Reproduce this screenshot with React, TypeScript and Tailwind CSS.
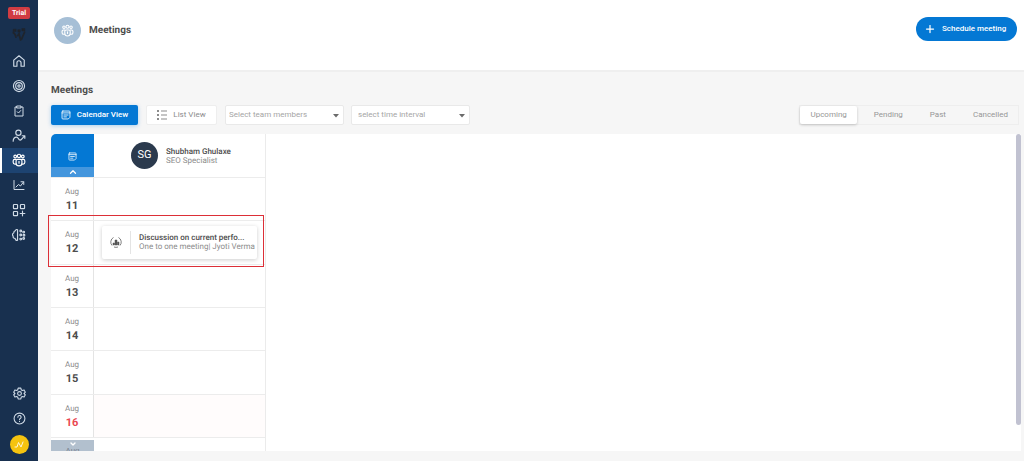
import { useState } from 'react';
import type { ReactNode } from 'react';
import { ChevronDown, ChevronUp, Plus } from 'lucide-react';

type IconProps = { className?: string; children?: ReactNode };

function Icon({ className = 'w-[14px] h-[14px]', children }: IconProps) {
  return (
    <svg
      viewBox="0 0 24 24"
      fill="none"
      stroke="currentColor"
      strokeWidth={2}
      strokeLinecap="round"
      strokeLinejoin="round"
      className={className}
      aria-hidden="true"
    >
      {children}
    </svg>
  );
}

function PeopleIcon({ className }: IconProps) {
  return (
    <Icon className={className}>
      <circle cx="5.500" cy="6" r="2.3" />
      <circle cx="12" cy="5" r="2.8" />
      <circle cx="18.500" cy="6" r="2.3" />
      <path d="M7 11H4.500A2.500 2.500 0 0 0 2 13.500V16a3 3 0 0 0 3 3h1.500" />
      <path d="M17 11h2.500a2.500 2.500 0 0 1 2.500 2.500V16a3 3 0 0 1-3 3h-1.500" />
      <path d="M9.500 11h5a2.500 2.500 0 0 1 2.500 2.500V17a5 5 0 0 1-10 0v-3.500A2.500 2.500 0 0 1 9.500 11z" />
      <path d="M12 14.500v3" />
    </Icon>
  );
}

function NoteIcon({ className }: IconProps) {
  return (
    <Icon className={className}>
      <path d="M4.500 2.500h15a2 2 0 0 1 2 2v13l-4 4h-13a2 2 0 0 1-2-2v-15a2 2 0 0 1 2-2z" />
      <path d="M2.500 7h19M7 12h10M7 16.500h6" />
    </Icon>
  );
}

const navItems = [
  {
    label: 'Home',
    icon: (
      <Icon>
        <path d="M3 10.500 12 3l9 7.500V21h-5.500v-6a3.500 3.500 0 0 0-7 0v6H3z" />
      </Icon>
    ),
  },
  {
    label: 'Goals',
    icon: (
      <Icon>
        <circle cx="12" cy="12" r="9.500" />
        <circle cx="12" cy="12" r="5.700" />
        <circle cx="12" cy="12" r="2" />
      </Icon>
    ),
  },
  {
    label: 'Tasks',
    icon: (
      <Icon className="w-[12px] h-[12px]">
        <path d="M8 4H4v18h16V4h-4" />
        <path d="M8 2h8v4H8zM8.500 13.500l2.500 2.500 4.500-5" />
      </Icon>
    ),
  },
  {
    label: 'Feedback',
    icon: (
      <Icon>
        <circle cx="11" cy="6.500" r="4.500" />
        <path d="M2 21c0-4 2.500-7 6-7 3 0 3 5 6 5s4-5 8-7M17.500 11.500H22V16" />
      </Icon>
    ),
  },
  { label: 'Meetings', icon: <PeopleIcon className="w-[14px] h-[14px]" /> },
  {
    label: 'Reports',
    icon: (
      <Icon className="w-[12px] h-[12px]">
        <path d="M2 3v18h20M6 16l5-5 4 3 6-8M16 5.500h5.500V11" />
      </Icon>
    ),
  },
  {
    label: 'Apps',
    icon: (
      <Icon>
        <rect x="2.500" y="2.500" width="7" height="7" rx="1" />
        <rect x="14.500" y="2.500" width="7" height="7" rx="1" />
        <rect x="2.500" y="14.500" width="7" height="7" rx="1" />
        <path d="M18 14v8M14 18h8" />
      </Icon>
    ),
  },
  {
    label: 'Insights',
    icon: (
      <Icon>
        <path d="M9.500 3v18c-2.500 1-4-1-4-3-3 0-4-2-3.500-4-2-2-1-5 1-5.500C3 5.500 4 5 5.500 5c.5-2 2-3 4-2z" />
        <circle cx="15" cy="5" r="1.500" />
        <circle cx="20" cy="7" r="1.500" />
        <circle cx="15" cy="12" r="1.500" />
        <circle cx="20.500" cy="12.500" r="1.500" />
        <circle cx="15" cy="19" r="1.500" />
        <circle cx="20" cy="18" r="1.500" />
      </Icon>
    ),
  },
];

const days = ['11', '12', '13', '14', '15', '16'];
const tabs = ['Upcoming', 'Pending', 'Past', 'Cancelled'];

function Sidebar() {
  return (
    <aside className="w-[38px] shrink-0 bg-[#18304f] text-[#cfdae6] flex flex-col items-center pt-[7px] pb-[7px]">
      <span className="w-[22px] h-3 rounded-[2px] bg-[#d13c42] text-white text-[7px] leading-3 font-bold text-center">
        Trial
      </span>
      <svg
        viewBox="0 0 24 24"
        className="w-[14px] h-[14px] mt-[9px] shrink-0 text-[#1f242c]"
        fill="none"
        stroke="currentColor"
        strokeWidth={3}
        aria-hidden="true"
      >
        <path d="M1 8c3 0 5 4 6 9M9 14l3-4 3 12M16 20l6-14" />
        <path d="M2 2h5v4H2zM10 3h4v4h-4zM17 1h5v4h-5z" fill="currentColor" strokeWidth={1} />
      </svg>
      <nav className="w-full grid grid-rows-8 h-[198px] mt-[7px]">
        {navItems.map((item) => (
          <a
            key={item.label}
            href="#"
            aria-label={item.label}
            className={`flex items-center justify-center ${
              item.label === 'Meetings' ? 'bg-[#1d4371] text-white border-l-2 border-white pr-[2px]' : ''
            }`}
          >
            {item.icon}
          </a>
        ))}
      </nav>
      <div className="mt-auto flex flex-col items-center">
        <a href="#" aria-label="Settings" className="h-[25px] flex items-center">
          <Icon className="w-[13px] h-[13px]">
            <path d="M9.500 2h5l.7 3.200 2 1.200 3.200-1 2.400 4.200L20.400 12l2.400 2.400-2.400 4.200-3.200-1-2 1.200-.7 3.200h-5l-.7-3.200-2-1.200-3.200 1-2.400-4.200L3.600 12 1.200 9.600l2.400-4.200 3.200 1 2-1.200z" />
            <circle cx="12" cy="12" r="3.500" />
          </Icon>
        </a>
        <a href="#" aria-label="Help" className="h-[25px] flex items-center">
          <Icon className="w-[13px] h-[13px]">
            <circle cx="12" cy="12" r="10" />
            <path d="M9 9.500a3 3 0 1 1 4.500 2.500c-1 .6-1.500 1-1.500 2M12 17.300v.2" />
          </Icon>
        </a>
        <button
          aria-label="Account"
          className="w-[19px] h-[19px] mt-1 rounded-full bg-[#f5c30f] text-[#fdf6dc] flex items-center justify-center"
        >
          <Icon className="w-3 h-3">
            <path d="M4 16h4l3-9 5 9 4-10" />
          </Icon>
        </button>
      </div>
    </aside>
  );
}

function SelectBox({ label, padding }: { label: string; padding: string }) {
  return (
    <div className="relative w-[119px] flex">
      <select
        aria-label={label}
        className={`w-full h-5 appearance-none rounded-[2px] border border-[#e9e9e9] bg-white text-[8px] text-[#a5a5a5] ${padding}`}
      >
        <option>{label}</option>
      </select>
      <svg
        viewBox="0 0 6 4"
        className="absolute right-[5px] top-[9px] w-[6px] h-1 fill-[#6b6b6b] pointer-events-none"
        aria-hidden="true"
      >
        <path d="M0 0h6L3 3.500z" />
      </svg>
    </div>
  );
}

function MeetingCard() {
  return (
    <article className="w-[155px] h-[33px] rounded-[2px] bg-white shadow-[0_1px_4px_rgba(0,0,0,0.2)] flex items-center">
      <div className="w-[29px] h-[23px] shrink-0 border-r border-[#e4e4e4] flex items-center justify-center text-[#555]">
        <svg viewBox="0 0 24 24" className="w-3 h-3" fill="none" stroke="currentColor" aria-hidden="true">
          <path d="M7 3a10.500 10.500 0 0 0-3 16M17 3a10.500 10.500 0 0 1 3 16M8 22a11 11 0 0 0 8 0" strokeWidth="1.500" />
          <path d="M6 18v-4h3v4zM10 18V8h4v10zM15 18v-6h3v6z" fill="currentColor" />
        </svg>
      </div>
      <div className="pl-2 min-w-0 whitespace-nowrap text-[8px] leading-[9px]">
        <p className="font-medium text-[#4d4d4d]">Discussion on current perfo...</p>
        <p className="text-[#8c8c8c]">One to one meeting| Jyoti Verma</p>
      </div>
    </article>
  );
}

function Calendar() {
  return (
    <section className="h-[317px] mt-[9px] mr-[3px] bg-white rounded-tl-[5px] flex justify-between">
      <div className="w-[215px] flex flex-col border-r border-[#ebebeb]">
        <div className="h-[43px] shrink-0 flex">
          <div className="w-[43px] rounded-tl-[5px] bg-[#0478d4] text-white flex flex-col">
            <div className="flex-1 flex items-end justify-center pb-[6px]">
              <NoteIcon className="w-[9px] h-[9px]" />
            </div>
            <button aria-label="Earlier days" className="h-[10px] bg-[#4496dd] flex items-center justify-center">
              <ChevronUp className="w-[10px] h-[10px]" strokeWidth={3} />
            </button>
          </div>
          <div className="flex-1 flex items-center pl-[37px]">
            <span className="w-[27px] h-[27px] rounded-full bg-[#2b3a4d] text-white text-[11px] flex items-center justify-center">
              SG
            </span>
            <div className="ml-2 text-[8px] leading-[9px] whitespace-nowrap">
              <p className="font-medium text-[#4d4d4d]">Shubham Ghulaxe</p>
              <p className="text-[#8c8c8c]">SEO Specialist</p>
            </div>
          </div>
        </div>
        <div className="h-[260px] shrink-0 grid grid-rows-6">
          {days.map((day) => (
            <div key={day} className="relative flex border-t border-[#ececec]">
              <div className="w-[43px] border-r border-[#e4e4e4] flex flex-col items-center pt-[9px] text-[#8c8c8c]">
                <span className="text-[8px] leading-[10px]">Aug</span>
                <span
                  className={`mt-px text-[11px] leading-4 font-bold ${
                    day === '16' ? 'text-[#ea4750]' : 'text-[#4d4d4d]'
                  }`}
                >
                  {day}
                </span>
              </div>
              <div className={`flex-1 flex items-center pl-2 ${day === '16' ? 'bg-[#fffcfc]' : ''}`}>
                {day === '12' && <MeetingCard />}
              </div>
              {day === '12' && (
                <div className="absolute z-10 -left-[3px] -top-[6px] w-[216px] h-[52px] border border-[#dc2f37] pointer-events-none" />
              )}
            </div>
          ))}
        </div>
        <div className="flex-1 flex items-end border-t border-[#ececec]">
          <button
            aria-label="Later days"
            className="w-[43px] h-[11px] overflow-hidden bg-[#b2c0ce] text-[#7a838e] flex flex-col items-center"
          >
            <ChevronDown className="w-[10px] h-[8px] shrink-0 text-white" strokeWidth={4} />
            <span className="-mt-px text-[8px] leading-[8px]">Aug</span>
          </button>
        </div>
      </div>
      <div className="w-[5px] h-[291px] rounded-full bg-[#c1c2d1]" />
    </section>
  );
}

export default function App() {
  const [activeTab, setActiveTab] = useState('Upcoming');

  return (
    <div className="min-h-screen flex bg-[#f6f6f6] font-['Roboto',sans-serif] [text-rendering:geometricPrecision] text-[#444]">
      <Sidebar />
      <div className="flex-1 min-w-0 flex flex-col">
        <header className="h-[72px] bg-white border-b-2 border-[#efefef] pl-4 pr-[7px] pt-[17px] flex items-start justify-between">
          <div className="flex items-center gap-2">
            <span className="w-[27px] h-[27px] rounded-full bg-[#a6bfd6] text-white flex items-center justify-center">
              <PeopleIcon className="w-[13px] h-[13px]" />
            </span>
            <h1 className="text-[10px] font-bold text-[#4d4d4d]">Meetings</h1>
          </div>
          <button className="h-6 w-[101px] rounded-full bg-[#0478d4] text-white text-[8px] font-medium flex items-center pl-2 gap-[6px]">
            <Plus className="w-[12px] h-[12px]" strokeWidth={2.5} />
            Schedule meeting
          </button>
        </header>

        <main className="pl-[13px] pt-[11px]">
          <h2 className="text-[10px] leading-4 font-bold text-[#4d4d4d]">Meetings</h2>
          <div className="mt-[6px] flex items-center">
            <button className="w-[87px] h-5 rounded-[2px] bg-[#0478d4] text-white text-[8px] font-medium flex items-center justify-center gap-[6px] shadow-[0_1px_4px_rgba(4,120,212,0.3)]">
              <NoteIcon className="w-[10px] h-[10px]" />
              Calendar View
            </button>
            <button className="ml-2 w-[71px] h-5 rounded-[2px] border border-[#eeeeee] bg-white text-[#8c8c8c] text-[8px] flex items-center justify-center gap-[6px]">
              <svg viewBox="0 0 10 10" className="w-[10px] h-[10px]" fill="currentColor" aria-hidden="true">
                <path d="M0 0h2v2H0zM0 4h2v2H0zM0 8h2v2H0zM4 .6h6v.8H4zM4 4.600h6v.8H4zM4 8.600h6v.8H4z" />
              </svg>
              List View
            </button>
            <div className="ml-2 flex gap-[7px]">
              <SelectBox label="Select team members" padding="pl-[3px]" />
              <SelectBox label="select time interval" padding="pl-[6px]" />
            </div>
            <div className="ml-auto mr-[5px] h-5 border border-[#eeeeee] flex gap-[7px] text-[8px] text-[#979797]">
              {tabs.map((tab) => (
                <button
                  key={tab}
                  onClick={() => setActiveTab(tab)}
                  className={`px-[10px] ${
                    activeTab === tab ? 'bg-white rounded-[2px] shadow-[0_1px_3px_rgba(0,0,0,0.2)]' : ''
                  }`}
                >
                  {tab}
                </button>
              ))}
            </div>
          </div>
          <Calendar />
        </main>
      </div>
    </div>
  );
}
